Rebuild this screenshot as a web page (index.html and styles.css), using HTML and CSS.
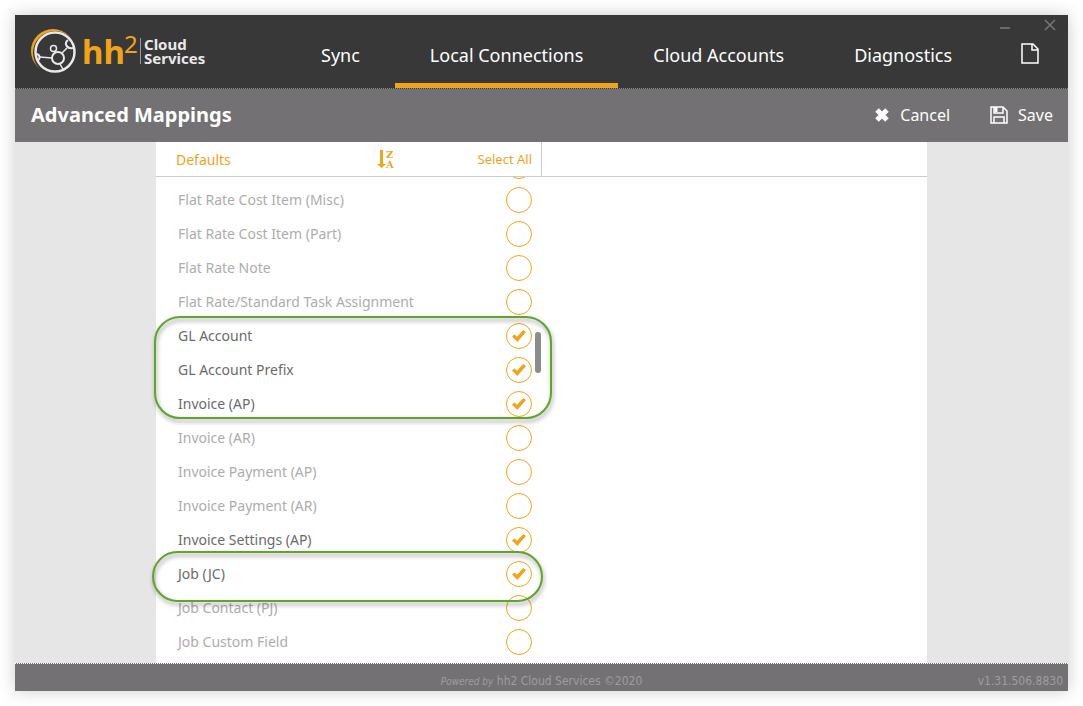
FILE: index.html
```
<!DOCTYPE html>
<html lang="en">
<head>
    <meta charset="utf-8">
    <title>Advanced Mappings</title>
    <link rel="stylesheet" href="styles.css">
</head>
<body>
    <div class="window">
        <header class="header">
            <a class="logo" href="#" aria-label="hh2 Cloud Services">
                <svg width="180" height="48" viewBox="0 0 180 48">
                    <circle cx="22" cy="22" r="22" fill="#f0a41c"/>
                    <circle cx="24" cy="24" r="22" fill="#383838"/>
                    <g fill="none" stroke="#e9e9e9">
                        <circle cx="24" cy="23" r="19.5" stroke-width="2.5"/>
                        <circle cx="27" cy="29" r="6" stroke-width="2"/>
                        <circle cx="22.5" cy="19.5" r="3" stroke-width="1.5"/>
                        <path d="M24 22l1 2M21 29L9 28M29 35l4 7M31 24l5-5" stroke-width="1.5"/>
                        <path d="M5 25c4 0 5 5 1 7M37 11c-4 3-2 9 5 8" stroke-width="2"/>
                    </g>
                    <text class="logo-name" x="51" y="35">hh</text>
                    <text class="logo-power" x="93" y="24">2</text>
                    <path d="M109.5 9v26" stroke="#9a9a9a"/>
                    <text class="logo-sub" x="113" y="21">Cloud</text>
                    <text class="logo-sub" x="113" y="35">Services</text>
                </svg>
            </a>
            <nav class="tabs">
                <a href="#">Sync</a>
                <a href="#" class="active">Local Connections</a>
                <a href="#">Cloud Accounts</a>
                <a href="#">Diagnostics</a>
            </nav>
            <div class="window-tools">
                <div class="window-buttons">
                    <button aria-label="Minimize"><svg width="12" height="12"><path d="M1 9h10" stroke="#6a6a6a" stroke-width="2"/></svg></button>
                    <button aria-label="Close"><svg width="12" height="12"><path d="M1 1l10 10M11 1L1 11" stroke="#777" stroke-width="1.5"/></svg></button>
                </div>
                <button class="log-button" aria-label="Logs"><svg width="20" height="21" fill="none" stroke="#fff" stroke-width="1.5"><path d="M2 1h11l5 5v14H2zM12 1v6h6"/></svg></button>
            </div>
        </header>

        <div class="toolbar">
            <h1>Advanced Mappings</h1>
            <div class="actions">
                <button>
                    <svg width="16" height="16"><path d="M3 3l10 10M13 3L3 13" stroke="#fff" stroke-width="5"/></svg>
                    Cancel
                </button>
                <button>
                    <svg width="18" height="18" fill="none" stroke="#fff" stroke-width="1.5"><path d="M1 1h12l4 4v12H1zM4 1v6h9V1M4 17v-6h10v6"/><path d="M6 1v5" stroke-width="3"/></svg>
                    Save
                </button>
            </div>
        </div>

        <main class="content">
            <div class="panel">
                <div class="panel-header">
                    <div class="defaults">
                        <span class="defaults-title">Defaults</span>
                        <button class="sort" aria-label="Sort Z to A">
                            <svg width="20" height="20">
                                <path d="M3 1h3v14h3l-4.5 4L0 15h3z" fill="#f0a41c"/>
                                <text x="9" y="9">Z</text>
                                <text x="9" y="19">A</text>
                            </svg>
                        </button>
                        <button class="select-all">Select All</button>
                    </div>
                </div>
                <div class="list">
                    <label class="row"><input type="checkbox"></label>
                    <label class="row">Flat Rate Cost Item (Misc)<input type="checkbox"></label>
                    <label class="row">Flat Rate Cost Item (Part)<input type="checkbox"></label>
                    <label class="row">Flat Rate Note<input type="checkbox"></label>
                    <label class="row">Flat Rate/Standard Task Assignment<input type="checkbox"></label>
                    <label class="row">GL Account<input type="checkbox" checked></label>
                    <label class="row">GL Account Prefix<input type="checkbox" checked></label>
                    <label class="row">Invoice (AP)<input type="checkbox" checked></label>
                    <label class="row">Invoice (AR)<input type="checkbox"></label>
                    <label class="row">Invoice Payment (AP)<input type="checkbox"></label>
                    <label class="row">Invoice Payment (AR)<input type="checkbox"></label>
                    <label class="row">Invoice Settings (AP)<input type="checkbox" checked></label>
                    <label class="row">Job (JC)<input type="checkbox" checked></label>
                    <label class="row">Job Contact (PJ)<input type="checkbox"></label>
                    <label class="row">Job Custom Field<input type="checkbox"></label>
                </div>
                <div class="scroll-thumb"></div>
                <div class="highlight highlight-accounts"></div>
                <div class="highlight highlight-job"></div>
            </div>
        </main>

        <footer class="footer">
            <span class="powered"><em>Powered by</em> hh2 Cloud Services ©2020</span>
            <span class="version">v1.31.506.8830</span>
        </footer>
    </div>
</body>
</html>
```
FILE: styles.css
```
* {
    box-sizing: border-box;
}
body {
    margin: 0;
    padding: 15px;
    background: #fff;
    font-family: "Noto Sans", sans-serif;
}
button {
    padding: 0;
    border: 0;
    background: none;
    color: inherit;
    font: inherit;
    cursor: pointer;
}
svg {
    display: block;
    overflow: visible;
}
.window {
    display: flex;
    flex-direction: column;
    min-height: calc(100vh - 30px);
    box-shadow: 0 0 16px rgba(0, 0, 0, 0.2);
}
.header {
    display: flex;
    height: 74px;
    padding-left: 16px;
    background: #383838;
    border-bottom: 1px dotted #8a8a8a;
    color: #fff;
}
.logo {
    width: 255px;
    padding-top: 14px;
}
.logo-name {
    font-size: 33px;
    font-weight: bold;
    fill: #f0a41c;
}
.logo-power {
    font-size: 24px;
    fill: #f0a41c;
}
.logo-sub {
    font-size: 15px;
    font-weight: bold;
    fill: #e9e9e9;
}
.tabs {
    display: flex;
}
.tabs a {
    padding: 0 35px;
    border-bottom: 5px solid transparent;
    color: #fff;
    font-size: 18px;
    line-height: 80px;
    text-decoration: none;
    white-space: nowrap;
}
.tabs a.active {
    border-bottom-color: #f0a41c;
}
.window-tools {
    display: flex;
    flex-direction: column;
    align-items: flex-end;
    gap: 12px;
    margin-left: auto;
    padding: 4px 12px 0 0;
}
.window-buttons {
    display: flex;
    gap: 33px;
}
.log-button {
    margin-right: 16px;
}
.toolbar {
    display: flex;
    align-items: center;
    justify-content: space-between;
    height: 53px;
    padding: 0 15px 2px 16px;
    background: #737173;
    color: #fff;
}
.toolbar h1 {
    margin: 0;
    font-size: 20px;
}
.actions {
    display: flex;
    gap: 40px;
}
.actions button {
    display: flex;
    align-items: center;
    gap: 10px;
    font-size: 16px;
}
.content {
    flex: 1;
    background: #e6e6e6;
}
.panel {
    position: relative;
    max-width: 771px;
    height: 100%;
    margin: 0 auto;
    background: #fff;
}
.panel-header {
    height: 35px;
    border-bottom: 1px solid #ccc;
}
.defaults {
    display: flex;
    align-items: center;
    width: 386px;
    height: 34px;
    padding: 0 9px 0 20px;
    border-right: 1px solid #ccc;
    color: #f0a41c;
    font-size: 14px;
}
.defaults-title {
    width: 201px;
}
.sort text {
    fill: #f0a41c;
    font: bold 10px "DejaVu Serif", serif;
}
.select-all {
    margin-left: auto;
    font-size: 13px;
}
.list {
    width: 386px;
    padding: 0 10px 4px 22px;
    overflow: hidden;
}
.row {
    display: flex;
    align-items: center;
    justify-content: space-between;
    height: 34px;
    color: #adadad;
    font-size: 14px;
    line-height: 18px;
}
/* scrolled mostly out of view */
.row:first-child {
    justify-content: flex-end;
    margin-top: -28px;
}
.row:has(:checked) {
    color: #6b6b6b;
}
.row input {
    display: grid;
    place-items: center;
    width: 26px;
    height: 26px;
    margin: 0;
    appearance: none;
    border: 1px solid #f0a41c;
    border-radius: 50%;
}
.row input:checked::before {
    content: "";
    width: 14px;
    height: 12px;
    background: #f0a41c;
    clip-path: polygon(0 55%, 18% 38%, 36% 56%, 80% 0, 100% 17%, 38% 100%);
}
.scroll-thumb {
    position: absolute;
    top: 190px;
    left: 379px;
    width: 6px;
    height: 41px;
    border-radius: 3px;
    background: #8c8c8c;
}
.highlight {
    position: absolute;
    border: 2px solid #5fa52b;
    border-radius: 26px;
    filter: drop-shadow(1px 3px 2px rgba(0, 0, 0, 0.4));
    pointer-events: none;
}
.highlight-accounts {
    top: 174px;
    left: -2px;
    width: 398px;
    height: 103px;
}
.highlight-job {
    top: 409px;
    left: -4px;
    width: 391px;
    height: 51px;
}
.footer {
    display: grid;
    grid-template-columns: 1fr auto 1fr;
    align-items: center;
    height: 28px;
    padding: 6px 5px 0;
    background: #737173;
    border-top: 1px dotted #fff;
    color: #9f9d9f;
    font: 12px "DejaVu Sans Condensed", "DejaVu Sans", sans-serif;
}
.powered {
    grid-column: 2;
}
.powered em {
    font-size: 10px;
}
.version {
    text-align: right;
}
```
